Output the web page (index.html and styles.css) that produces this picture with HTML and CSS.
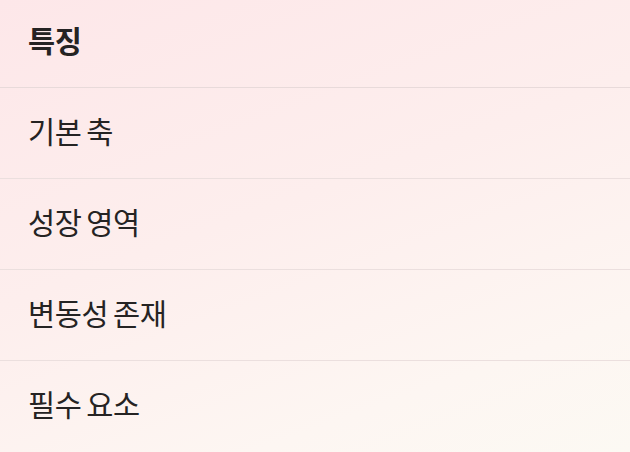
FILE: index.html
```html
<!DOCTYPE html>
<html lang="ko">
<head>
<meta charset="utf-8">
<link rel="stylesheet" href="styles.css">
</head>
<body>
<table class="features">
  <thead>
    <tr><th>특징</th></tr>
  </thead>
  <tbody>
    <tr><td>기본 축</td></tr>
    <tr><td>성장 영역</td></tr>
    <tr><td>변동성 존재</td></tr>
    <tr><td>필수 요소</td></tr>
  </tbody>
</table>
</body>
</html>
```
FILE: styles.css
```css
html, body {
  margin: 0;
  height: 100%;
}
body {
  background: linear-gradient(160deg, #fde7e9 0%, #fdeeed 45%, #fdf6f2 80%, #fcf9f3 100%);
  font-family: "Noto Sans CJK KR", "Noto Sans", sans-serif;
  color: #252323;
  overflow: hidden;
}
.features {
  width: 100%;
  border-collapse: collapse;
}
.features th,
.features td {
  text-align: left;
  font-size: 29.5px;
  line-height: 40px;
  letter-spacing: -0.4px;
  word-spacing: -3px;
  padding: 0 28px;
  vertical-align: top;
}
.features th {
  font-weight: 700;
  height: 87px;
  box-sizing: border-box;
  padding-top: 19px;
  border-bottom: 1px solid #e8dada;
}
.features td {
  font-weight: 400;
  height: 91px;
  box-sizing: border-box;
  padding-top: 22px;
  border-bottom: 1px solid #ebdfde;
}
.features tbody tr:last-child td {
  border-bottom: none;
}
```
